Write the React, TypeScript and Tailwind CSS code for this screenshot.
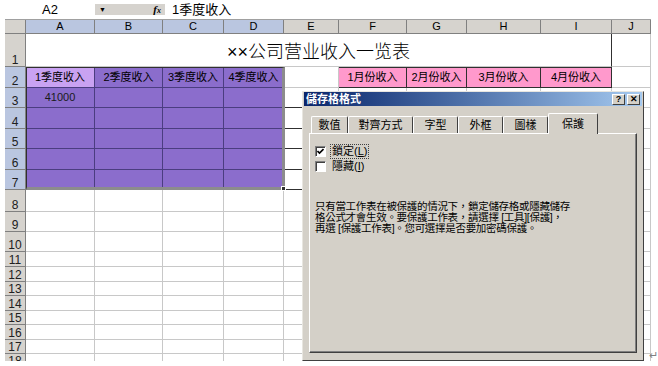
import type { ReactNode } from 'react'

const GRID = 'grid grid-cols-[21px_69px_68px_61px_60px_55px_68px_60px_74px_71px_39px]'
const COLS = ['A', 'B', 'C', 'D', 'E', 'F', 'G', 'H', 'I', 'J']

const ROWS = [
  { n: 3, h: 'h-[20px]' },
  { n: 4, h: 'h-[21px]' },
  { n: 5, h: 'h-[20px]' },
  { n: 6, h: 'h-[21px]' },
  { n: 7, h: 'h-[20px]' },
  { n: 8, h: 'h-[22px]' },
  { n: 9, h: 'h-[20px]' },
  { n: 10, h: 'h-[20px]' },
  { n: 11, h: 'h-[15px]' },
  { n: 12, h: 'h-[15px]' },
  { n: 13, h: 'h-[14px]' },
  { n: 14, h: 'h-[15px]' },
  { n: 15, h: 'h-[14px]' },
  { n: 16, h: 'h-[15px]' },
  { n: 17, h: 'h-[14px]' },
  { n: 18, h: 'h-[14px]' },
]

const TABS = [
  { label: '數值', w: 'w-[37px]' },
  { label: '對齊方式', w: 'w-[65px]' },
  { label: '字型', w: 'w-[45px]' },
  { label: '外框', w: 'w-[45px]' },
  { label: '圖樣', w: 'w-[45px]' },
]

function RowHead({ n, on }: { n: number; on?: boolean }) {
  return (
    <div
      className={`flex items-end justify-center border-r border-b border-[#808080] text-[12px] leading-[12px] text-[#202020] ${
        on ? 'bg-[#bac6e0]' : 'bg-[#d6d3ce]'
      }`}
    >
      {n}
    </div>
  )
}

function Cell({ row, col, children }: { row: number; col: number; children?: ReactNode }) {
  const purple = row >= 3 && row <= 7 && col <= 3
  if (purple) {
    return (
      <div className="flex items-center justify-center border-r border-b border-[#4b3d80] bg-[#8b6dcc] text-[11px] text-[#1a1a1a]">
        {children}
      </div>
    )
  }
  if (row >= 3 && row <= 7 && col === 4) {
    return <div className="border-r border-b border-r-[#c8c8c8] border-b-[#303030] bg-white" />
  }
  return <div className="border-r border-b border-[#c8c8c8] bg-white" />
}

function CheckBox({ checked }: { checked?: boolean }) {
  return (
    <span className="flex h-[11px] w-[11px] items-center justify-center border border-t-[#808080] border-l-[#808080] border-r-white border-b-white bg-white shadow-[inset_1px_1px_0_#404040]">
      {checked && (
        <svg width="7" height="7" viewBox="0 0 7 7">
          <path d="M0.5 3 L2.5 5 L6.5 1" stroke="#000" strokeWidth="1.6" fill="none" />
        </svg>
      )}
    </span>
  )
}

function TitleBtn({ children }: { children: ReactNode }) {
  return (
    <span className="flex h-[11px] w-[13px] items-center justify-center border border-t-white border-l-white border-r-[#404040] border-b-[#404040] bg-[#d4d0c8] text-[9px] font-bold leading-none text-black">
      {children}
    </span>
  )
}

function FormatDialog() {
  return (
    <div className="absolute top-[91px] left-[302px] flex h-[270px] w-[342px] flex-col border border-t-[#e8e6e0] border-l-[#e8e6e0] border-r-[#404040] border-b-[#404040] bg-[#d4d0c8] font-['Liberation_Sans','Noto_Sans_CJK_TC',sans-serif]">
      <div className="mx-[1px] flex h-[14px] items-center justify-between bg-linear-to-r from-[#0a246a] to-[#a6caf0] px-[2px]">
        <span className="text-[11px] leading-none font-bold text-white">儲存格格式</span>
        <div className="flex gap-[2px]">
          <TitleBtn>?</TitleBtn>
          <TitleBtn>✕</TitleBtn>
        </div>
      </div>

      {/* tabs */}
      <div className="flex h-[27px] items-end pl-[8px]">
        {TABS.map((t) => (
          <div
            key={t.label}
            className={`flex h-[17px] ${t.w} items-center justify-center rounded-t-[2px] border-t border-l border-r border-t-white border-l-white border-r-[#404040] text-[11px] leading-none text-black`}
          >
            {t.label}
          </div>
        ))}
        <div className="relative z-10 -mb-[1px] flex h-[21px] w-[50px] items-center justify-center rounded-t-[2px] border-t border-l border-r border-t-white border-l-white border-r-[#404040] bg-[#d4d0c8] text-[11px] leading-none text-black">
          保護
        </div>
      </div>

      {/* panel */}
      <div className="ml-[6px] flex h-[220px] w-[328px] flex-col border border-t-white border-l-white border-r-[#404040] border-b-[#404040] pt-[10px] pl-[5px] shadow-[inset_-1px_-1px_0_#808080]">
        <div className="flex h-[15px] items-center gap-[4px] text-[11px] leading-none">
          <CheckBox checked />
          <span className="border border-dotted border-[#404040] px-[1px] py-[1px]">
            鎖定(<span className="underline">L</span>)
          </span>
        </div>
        <div className="flex h-[15px] items-center gap-[4px] text-[11px] leading-none">
          <CheckBox />
          <span className="px-[2px]">
            隱藏(<span className="underline">I</span>)
          </span>
        </div>
        <p className="mt-[27px] text-[10.5px] leading-[11px] tracking-[-0.3px] text-black">
          只有當工作表在被保護的情況下，鎖定儲存格或隱藏儲存
          <br />
          格公式才會生效。要保護工作表，請選擇 [工具][保護]，
          <br />
          再選 [保護工作表]。您可選擇是否要加密碼保護。
        </p>
      </div>
    </div>
  )
}

export default function App() {
  return (
    <div className="relative h-[366px] w-[658px] overflow-hidden bg-white font-['Liberation_Sans','Noto_Sans_CJK_SC',sans-serif] text-black">
      {/* formula bar */}
      <div className="flex h-[19px] items-center pl-[5px]">
        <div className="w-[90px] text-center text-[13px] leading-none">A2</div>
        <div className="flex h-[11px] w-[70px] items-center justify-between bg-[#d6d3ce] px-[4px] text-[9px] leading-none">
          <span className="text-[7px]">▼</span>
          <span className="font-['Liberation_Serif',serif] text-[11px] font-bold italic">
            f<span className="text-[8px]">x</span>
          </span>
        </div>
        <div className="pl-[7px] text-[13px] leading-none">1季度收入</div>
      </div>

      {/* sheet */}
      <div className="relative ml-[5px] h-[342px] w-[646px] overflow-hidden">
        <div className={`${GRID} h-[15px] border-t border-[#a0a0a0]`}>
          <div className="border-r border-b border-[#808080] bg-[#d6d3ce]" />
          {COLS.map((c, i) => (
            <div
              key={c}
              className={`flex items-center justify-center border-r border-b border-[#808080] text-[11px] leading-none ${
                i <= 3 ? 'bg-[#bac6e0]' : 'bg-[#d6d3ce]'
              }`}
            >
              {c}
            </div>
          ))}
        </div>

        {/* row 1 */}
        <div className={`${GRID} h-[33px]`}>
          <RowHead n={1} />
          <div className="col-span-9 flex items-center justify-center border-r border-b border-r-[#303030] border-b-[#c8c8c8] pt-[3px] text-[18px] leading-none font-light">
            ××公司营业收入一览表
          </div>
          <div className="border-r border-b border-[#c8c8c8]" />
        </div>

        {/* row 2 */}
        <div className={`${GRID} h-[21px]`}>
          <RowHead n={2} on />
          <div className="flex items-center justify-center border-r border-b border-[#4b3d80] bg-[#c9a2f2] text-[11px]">1季度收入</div>
          <div className="flex items-center justify-center border-r border-b border-[#4b3d80] bg-[#8b6dcc] text-[11px]">2季度收入</div>
          <div className="flex items-center justify-center border-r border-b border-[#4b3d80] bg-[#8b6dcc] text-[11px]">3季度收入</div>
          <div className="flex items-center justify-center border-r border-b border-[#4b3d80] bg-[#8b6dcc] text-[11px]">4季度收入</div>
          <div className="border-r border-b border-[#c8c8c8]" />
          {['1月份收入', '2月份收入', '3月份收入', '4月份收入'].map((t) => (
            <div
              key={t}
              className="flex items-center justify-center border-t border-r border-b border-[#303030] bg-[#ff99cc] text-[11px]"
            >
              {t}
            </div>
          ))}
          <div className="border-r border-b border-[#c8c8c8]" />
        </div>

        {ROWS.map((r) => (
          <div key={r.n} className={`${GRID} ${r.h}`}>
            <RowHead n={r.n} on={r.n <= 7} />
            {COLS.map((c, i) => (
              <Cell key={c} row={r.n} col={i}>
                {r.n === 3 && i === 0 ? '41000' : null}
              </Cell>
            ))}
          </div>
        ))}

        {/* selection A2:D7 */}
        <div className="pointer-events-none absolute top-[48px] left-[21px] h-[123px] w-[259px] border-t border-l border-r-[3px] border-b-[3px] border-t-[#303030] border-l-[#303030] border-r-[#8c8c8c] border-b-[#8c8c8c]">
          <div className="absolute -right-[4px] -bottom-[4px] h-[5px] w-[5px] border border-white bg-[#303030]" />
        </div>
      </div>

      <FormatDialog />

      <span className="absolute top-[350px] left-[649px] text-[11px] leading-none text-[#808080]">↵</span>
    </div>
  )
}
